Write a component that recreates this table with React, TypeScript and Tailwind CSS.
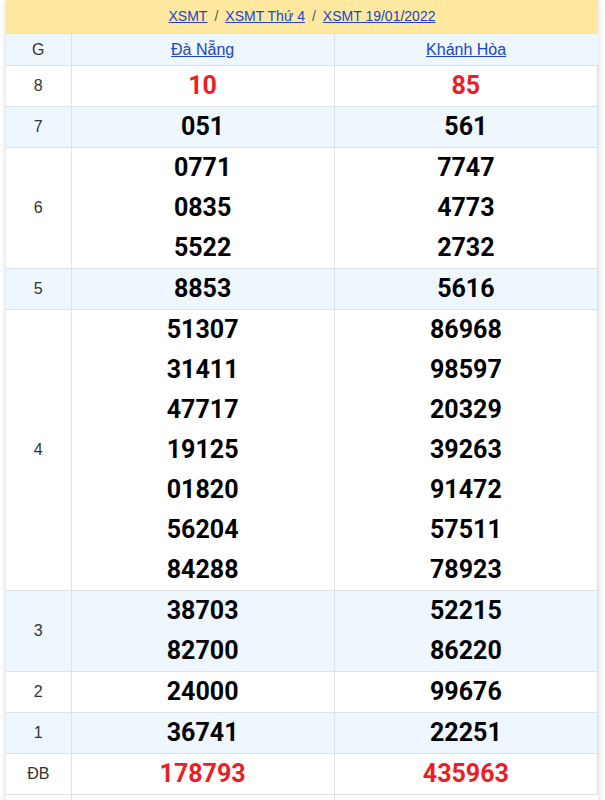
const rows: { g: string; a: string[]; b: string[]; red?: boolean; alt?: boolean }[] = [
  { g: "8", a: ["10"], b: ["85"], red: true },
  { g: "7", a: ["051"], b: ["561"], alt: true },
  { g: "6", a: ["0771", "0835", "5522"], b: ["7747", "4773", "2732"] },
  { g: "5", a: ["8853"], b: ["5616"], alt: true },
  {
    g: "4",
    a: ["51307", "31411", "47717", "19125", "01820", "56204", "84288"],
    b: ["86968", "98597", "20329", "39263", "91472", "57511", "78923"],
  },
  { g: "3", a: ["38703", "82700"], b: ["52215", "86220"], alt: true },
  { g: "2", a: ["24000"], b: ["99676"] },
  { g: "1", a: ["36741"], b: ["22251"], alt: true },
  { g: "ĐB", a: ["178793"], b: ["435963"], red: true },
];

function Nums({ list, red }: { list: string[]; red?: boolean }) {
  return (
    <td className="border border-[#dee2e6] p-0 text-center align-middle">
      {list.map((n) => (
        <div
          key={n}
          className={`h-10 leading-10 text-[25px] font-bold font-['Roboto',sans-serif] ${
            red ? "text-[#ed1c25]" : "text-black"
          }`}
        >
          {n}
        </div>
      ))}
    </td>
  );
}

export default function App() {
  return (
    <div className="min-h-screen bg-white pl-[6px] pr-[7px] font-['Liberation_Sans',Arial,sans-serif]">
      <div className="bg-white shadow-[0_0_6px_rgba(0,0,0,0.18)]">
        <div className="h-[33px] bg-[#ffe8a0] flex items-center justify-center gap-[7px] text-[14px] text-[#555]">
          <a className="text-[#2044c8] underline">XSMT</a>
          <span>/</span>
          <a className="text-[#2044c8] underline">XSMT Thứ 4</a>
          <span>/</span>
          <a className="text-[#2044c8] underline">XSMT 19/01/2022</a>
        </div>
        <table className="w-full border-collapse table-fixed">
          <colgroup>
            <col className="w-[65px]" />
            <col />
            <col />
          </colgroup>
          <tbody>
            <tr className="bg-[#eef6fe] h-[32px]">
              <td className="border border-[#dee2e6] border-l-0 text-center text-[16px] text-[#333]">G</td>
              <td className="border border-[#dee2e6] text-center text-[16px]">
                <a className="text-[#2044c8] underline">Đà Nẵng</a>
              </td>
              <td className="border border-[#dee2e6] border-r-0 text-center text-[16px]">
                <a className="text-[#2044c8] underline">Khánh Hòa</a>
              </td>
            </tr>
            {rows.map((r) => (
              <tr key={r.g} className={r.alt ? "bg-[#eef6fe]" : "bg-white"}>
                <td className="border border-[#dee2e6] border-l-0 text-center align-middle text-[16px] text-[#333]">
                  {r.g}
                </td>
                <Nums list={r.a} red={r.red} />
                <Nums list={r.b} red={r.red} />
              </tr>
            ))}
            <tr className="h-10">
              <td className="border border-[#dee2e6] border-l-0"></td>
              <td className="border border-[#dee2e6]"></td>
              <td className="border border-[#dee2e6] border-r-0"></td>
            </tr>
          </tbody>
        </table>
      </div>
    </div>
  );
}
